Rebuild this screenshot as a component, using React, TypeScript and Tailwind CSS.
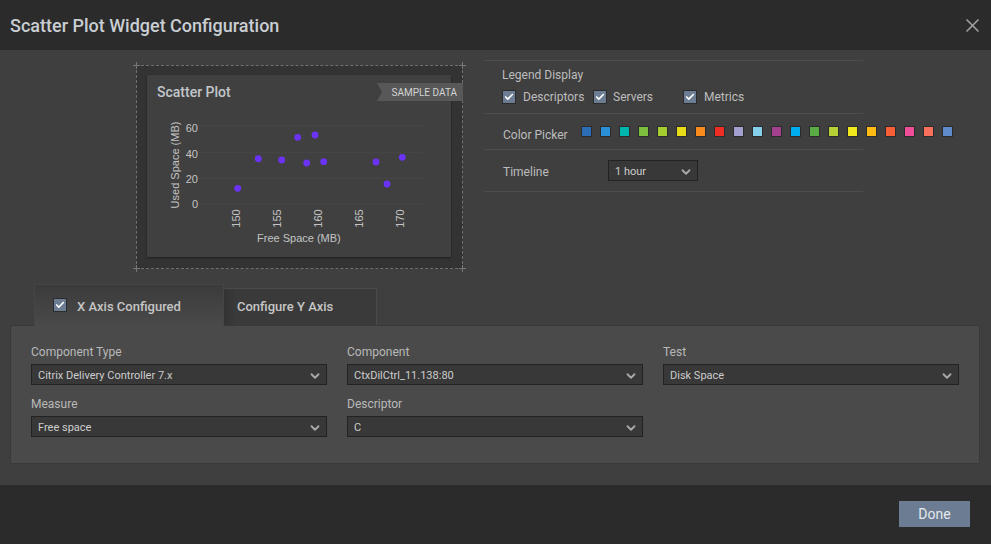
import { ChevronDown, Check } from 'lucide-react';

const swatches = [
  '#2d6db5', '#2a8fd6', '#00b5ad', '#7cbf3f', '#a5cf31', '#e8dc18', '#f98a1c', '#ee2e24', '#a39fcf', '#84cfe9',
  '#a4418f', '#00aeef', '#5aad45', '#b6d136', '#f1e91b', '#fdbb13', '#f85f36', '#f04e98', '#f7705b', '#5f8bcb',
];

const points = [
  [90.7, 113.3], [111.3, 83.7], [134.7, 85], [150.7, 62.3], [159.7, 88],
  [168, 60], [176.7, 86.7], [229, 87], [240, 109], [255.3, 82.3],
];

function Tick({ className }: { className?: string }) {
  return (
    <span className={`flex h-[14px] w-[14px] shrink-0 items-center justify-center border border-[#2b2b2b] bg-[#6b7c93] ${className ?? ''}`}>
      <Check size={10} strokeWidth={4} className="text-white" />
    </span>
  );
}

function Dropdown({ value, className }: { value: string; className?: string }) {
  return (
    <div className={`flex h-[21px] items-center justify-between border border-[#222222] bg-[#383838] pl-[6px] pr-[4px] pt-[4px] pb-[1px] text-[11px] text-[#cdcdcd] ${className ?? ''}`}>
      <span>{value}</span>
      <ChevronDown size={14} strokeWidth={3.2} className="text-[#a8a8a8]" />
    </div>
  );
}

function Field({ label, value }: { label: string; value: string }) {
  return (
    <div>
      <div className="mb-[4px] h-[16px] text-[12px] leading-[16px] text-[#b9b9b9]">{label}</div>
      <Dropdown value={value} />
    </div>
  );
}

function Corner({ className }: { className: string }) {
  return <span className={`absolute h-[7px] w-[7px] bg-[linear-gradient(#777777,#777777),linear-gradient(#777777,#777777)] bg-[length:1px_7px,7px_1px] bg-center bg-no-repeat ${className}`} />;
}

function Chart() {
  const tick = 'fill-[#c4c4c4] text-[11px]';
  return (
    <svg width="304" height="130" viewBox="0 26 304 130" className="block font-['Liberation_Sans',Arial,sans-serif]">
      {[51, 77.3, 103.3, 129].map((y) => (
        <line key={y} x1="50" x2="276" y1={y} y2={y} stroke="#474747" />
      ))}
      {[['60', 53], ['40', 79], ['20', 104], ['0', 129]].map(([t, y]) => (
        <text key={t} x="51" y={Number(y) + 4} textAnchor="end" className={tick}>{t}</text>
      ))}
      {[['150', 89], ['155', 130.3], ['160', 170.7], ['165', 212], ['170', 253]].map(([t, x]) => (
        <text key={t} transform={`translate(${Number(x) + 4} 143.5) rotate(-90)`} textAnchor="middle" className={tick}>{t}</text>
      ))}
      <text transform="translate(32 90) rotate(-90)" textAnchor="middle" className={tick}>Used Space (MB)</text>
      {points.map(([x, y]) => (
        <circle key={x} cx={x} cy={y} r="3.4" fill="#6b33f5" />
      ))}
    </svg>
  );
}

export default function App() {
  return (
    <div className="flex h-[544px] w-[991px] flex-col overflow-hidden bg-[#3f3f3f] font-['Roboto',sans-serif]">
      <header className="flex h-[50px] shrink-0 items-center justify-between bg-[#2b2b2b] pl-[10px] pr-[12px]">
        <h1 className="text-[18px] font-medium text-[#c9ced3]">Scatter Plot Widget Configuration</h1>
        <svg width="13" height="13" viewBox="0 0 13 13" className="text-[#a3a3a3]">
          <path d="M0.5 0.5 12.5 12.5M12.5 0.5 0.5 12.5" stroke="currentColor" strokeWidth="1.5" />
        </svg>
      </header>

      <main className="flex-1">
        <div className="flex items-start pl-[136px]">
          <div className="relative mt-[15px] h-[204px] w-[327px] border border-dashed border-[#707070] bg-[#333333] p-[9px] pl-[10px]">
            <Corner className="-left-[4px] -top-[4px]" />
            <Corner className="-right-[4px] -top-[4px]" />
            <Corner className="-bottom-[4px] -left-[4px]" />
            <Corner className="-bottom-[4px] -right-[4px]" />
            <div className="h-[182px] w-[304px] bg-[#404040] shadow-[0_1px_2px_rgba(0,0,0,0.4)]">
              <div className="h-[26px] px-[10px] pt-[8px] text-[14px] font-medium leading-[18px] text-[#c2c7cc]">Scatter Plot</div>
              <Chart />
              <div className="pl-[110px] font-['Liberation_Sans',Arial,sans-serif] text-[11px] leading-[14px] text-[#c4c4c4]">Free Space (MB)</div>
            </div>
            <div className="absolute -right-px top-[17px] flex h-[18px] w-[86px] items-center justify-end bg-[#585858] pr-[6px] text-[10px] text-[#d2d2d2] [clip-path:polygon(0_0,100%_0,100%_100%,0_100%,5px_50%)]">
              SAMPLE DATA
            </div>
          </div>

          <div className="ml-[21px] mt-[10px] w-[379px] text-[12px] text-[#bdbdbd]">
            <div className="h-[54px] border-y border-[#4d4d4d] pl-[18px] pt-[7px]">
              <div className="h-[15px] leading-[15px]">Legend Display</div>
              <div className="mt-[6px] flex h-[15px] items-center">
                <Tick />
                <span className="ml-[7px] w-[70px]">Descriptors</span>
                <Tick />
                <span className="ml-[6px] w-[70px]">Servers</span>
                <Tick />
                <span className="ml-[7px]">Metrics</span>
              </div>
            </div>
            <div className="flex h-[36px] items-start border-b border-[#4d4d4d] pl-[19px]">
              <span className="mt-[14px] w-[78px] shrink-0 whitespace-nowrap leading-[15px]">Color Picker</span>
              <div className="mt-[12px] flex gap-[8px]">
                {swatches.map((c) => (
                  <span key={c} className="h-[11px] w-[11px] shrink-0 border border-[#2b2b2b]" style={{ backgroundColor: c }} />
                ))}
              </div>
            </div>
            <div className="flex h-[42px] items-center border-b border-[#4d4d4d] pl-[19px]">
              <span className="w-[105px] pt-[2px]">Timeline</span>
              <Dropdown value="1 hour" className="w-[90px]" />
            </div>
          </div>
        </div>

        <div className="relative z-10 ml-[34px] mt-[15px] flex h-[41px] items-end">
          <div className="-mb-px flex h-[42px] w-[190px] items-center border-x border-t border-[#454545] border-b-transparent bg-[linear-gradient(#3b3b3b,#4a4a4a)] pl-[18px] pt-[2px] text-[13px] font-medium text-[#c6c6c6]">
            <Tick className="mb-[3px]" />
            <span className="ml-[10px]">X Axis Configured</span>
          </div>
          <div className="flex h-[37px] w-[153px] items-center border-r border-t border-[#4a4a4a] bg-[linear-gradient(90deg,#333333,#3a3a3a_12px)] pl-[13px] text-[13px] font-medium text-[#c6c6c6]">
            Configure Y Axis
          </div>
        </div>

        <section className="ml-[10px] h-[139px] w-[970px] border border-[#393939] bg-[#4a4a4a] px-[20px] pt-[18px]">
          <div className="grid grid-cols-[296px_296px_296px] gap-x-[20px] gap-y-[11px]">
            <Field label="Component Type" value="Citrix Delivery Controller 7.x" />
            <Field label="Component" value="CtxDilCtrl_11.138:80" />
            <Field label="Test" value="Disk Space" />
            <Field label="Measure" value="Free space" />
            <Field label="Descriptor" value="C" />
          </div>
        </section>
      </main>

      <footer className="flex h-[59px] shrink-0 justify-end bg-[#2b2b2b] pr-[21px] pt-[16px]">
        <button className="h-[26px] w-[71px] bg-[#6b7c93] text-[14px] text-[#e6e9ec]">Done</button>
      </footer>
    </div>
  );
}
